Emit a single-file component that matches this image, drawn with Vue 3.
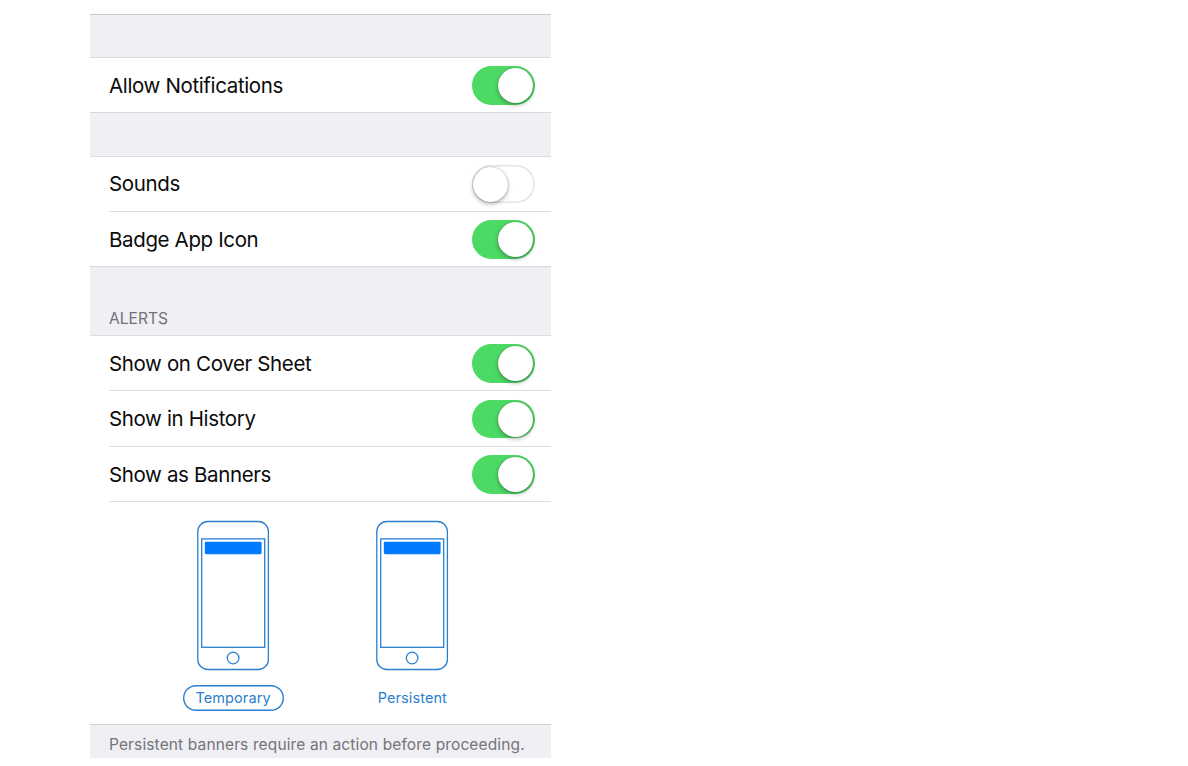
<script setup>
const groups = [
  { id: 'allow', title: '', rows: [{ label: 'Allow Notifications', on: true, cls: 'permit' }] },
  {
    id: 'general',
    title: '',
    rows: [
      { label: 'Sounds', on: false, cls: 'sounds' },
      { label: 'Badge App Icon', on: true, cls: 'badge' },
    ],
  },
  {
    id: 'alerts',
    title: 'ALERTS',
    rows: [
      { label: 'Show on Cover Sheet', on: true, cls: 'cover' },
      { label: 'Show in History', on: true, cls: 'history' },
      { label: 'Show as Banners', on: true, cls: 'banners' },
    ],
  },
]
const styles = [
  { label: 'Temporary', selected: true },
  { label: 'Persistent', selected: false },
]
</script>

<template>
  <main class="settings">
    <section v-for="g in groups" :key="g.id" :class="['group', g.id]">
      <header class="band"><span v-if="g.title">{{ g.title }}</span></header>
      <div v-for="r in g.rows" :key="r.label" :class="['row', r.cls]">
        <span class="label">{{ r.label }}</span>
        <span :class="['switch', { on: r.on }]"><i class="knob"></i></span>
      </div>
    </section>
    <section class="choices">
      <div v-for="s in styles" :key="s.label" class="choice">
        <svg class="phone" width="74" height="151" viewBox="0 0 74 151" fill="none" stroke="#2b7fce" stroke-width="1.3">
          <rect x="1.8" y="1.5" width="70.6" height="148" rx="10" />
          <rect x="5.7" y="18.9" width="63" height="108.4" />
          <rect x="8.8" y="21.8" width="56.8" height="12.4" rx="1.4" fill="#007aff" stroke="none" />
          <circle cx="37.1" cy="138" r="5.8" />
        </svg>
        <span :class="['pill', { selected: s.selected }]">{{ s.label }}</span>
      </div>
    </section>
    <footer class="note"><span>Persistent banners require an action before proceeding.</span></footer>
  </main>
</template>

<style>
body {
  background: #fff;
}
</style>

<style scoped>
.settings {
  width: 461px;
  margin-left: 90px;
  padding-top: 14px;
  font-family: Inter, "Liberation Sans", sans-serif;
  color: #0b0b0b;
}
.band {
  box-sizing: border-box;
  height: 45px;
  background: #efeff4;
  border-top: 1px solid #d8d8dc;
  border-bottom: 1px solid #dcdce0;
  padding-left: 19px;
}
.allow .band {
  height: 44px;
  border-top-color: #c8c8cd;
}
.alerts .band {
  height: 70px;
  padding-top: 42px;
  font-size: 15.6px;
  line-height: 20px;
  color: #717176;
}
.row {
  box-sizing: border-box;
  height: 55px;
  margin-left: 19px;
  padding-right: 16px;
  border-bottom: 1px solid #dddde0;
  display: flex;
  align-items: center;
  justify-content: space-between;
}
.group:not(.alerts) .row:last-child {
  border-bottom: 0;
}
.row.permit {
  height: 54px;
  padding-top: 1px;
}
.row.badge {
  height: 54px;
  padding-top: 1px;
}
.row.history {
  height: 56px;
}
.row.history,
.row.cover,
.row.banners {
  padding-top: 1px;
}
.label {
  font-size: 20.5px;
  line-height: 26px;
  letter-spacing: -0.36px;
  white-space: nowrap;
}
.switch {
  box-sizing: border-box;
  width: 63px;
  height: 38.5px;
  padding: 1.75px;
  border-radius: 20px;
  display: flex;
  background: #fff;
  box-shadow: inset 0 0 0 1.5px #e3e3e5;
}
.switch:not(.on) {
  padding-left: 1px;
}
.knob {
  width: 35px;
  height: 35px;
  border-radius: 50%;
  background: #fff;
  box-shadow: 0 2px 4px rgba(0, 0, 0, 0.3), 0 0 1px rgba(0, 0, 0, 0.45);
}
.switch.on {
  background: #4cd964;
  box-shadow: none;
  justify-content: flex-end;
}
.choices {
  display: flex;
  height: 222px;
  padding-left: 53.4px;
  box-sizing: border-box;
}
.choice {
  width: 179.3px;
  padding-top: 18px;
  display: flex;
  flex-direction: column;
  align-items: center;
}
.phone {
  display: block;
}
.pill {
  width: 101px;
  height: 26px;
  margin-top: 14px;
  border-radius: 13px;
  text-align: center;
  font-size: 14.5px;
  line-height: 25px;
  letter-spacing: 0.1px;
  color: #2b7fce;
}
.pill.selected {
  box-shadow: inset 0 0 0 1.4px #2b7fce;
}
.note {
  box-sizing: border-box;
  height: 34px;
  padding: 10px 0 0 19px;
  border-top: 1px solid #d0d0d5;
  background: #efeff4;
  font-size: 15.5px;
  line-height: 20px;
  letter-spacing: 0.13px;
  color: #747479;
  white-space: nowrap;
}
</style>
